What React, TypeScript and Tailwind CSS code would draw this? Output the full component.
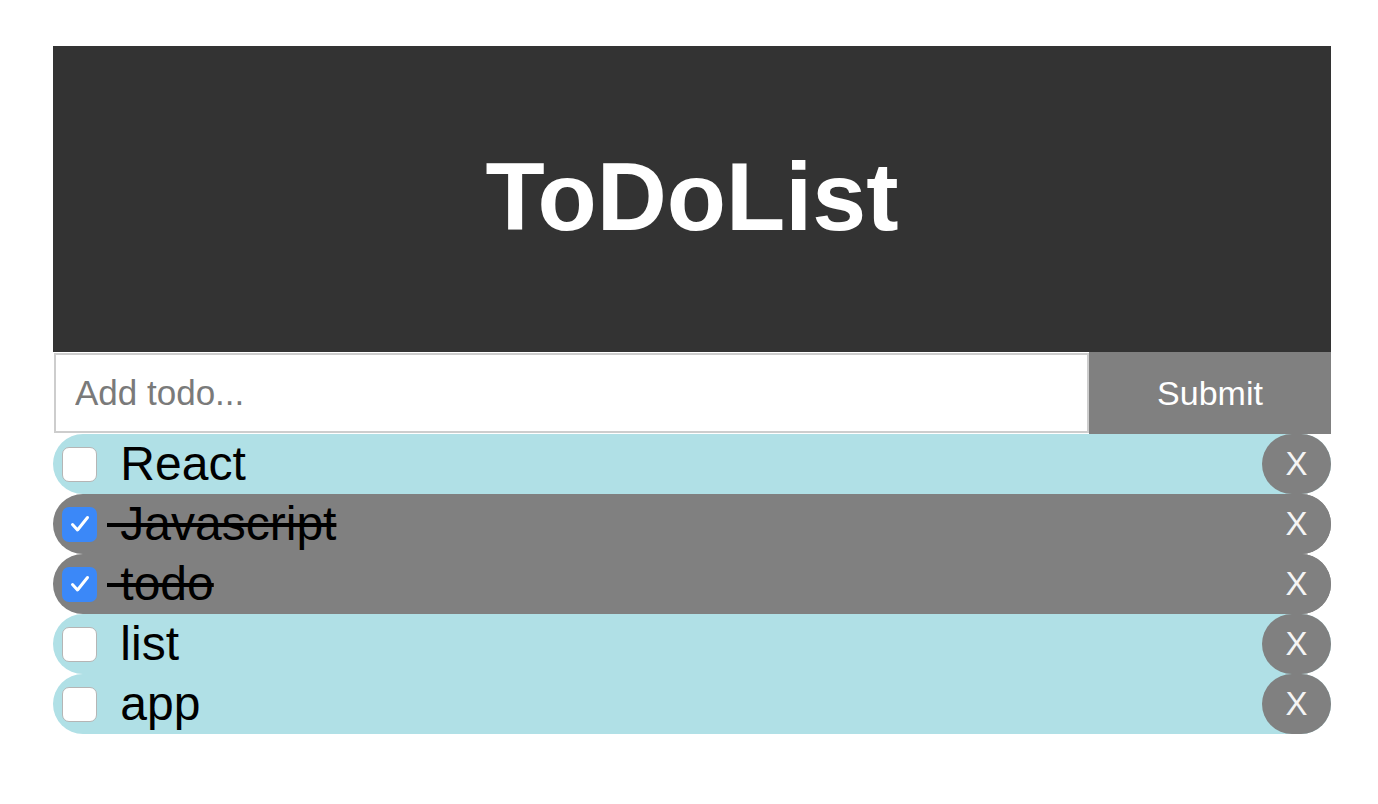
import { useState } from "react";

type Todo = { id: number; text: string; done: boolean };

const initialTodos: Todo[] = [
    { id: 1, text: "React", done: false },
    { id: 2, text: "Javascript", done: true },
    { id: 3, text: "todo", done: true },
    { id: 4, text: "list", done: false },
    { id: 5, text: "app", done: false },
];

export default function App() {
    const [todos, setTodos] = useState<Todo[]>(initialTodos);
    const [input, setInput] = useState<string>("");

    function addTodo() {
        if (input.trim().length === 0) return;
        setTodos([...todos, { id: Date.now(), text: input, done: false }]);
        setInput("");
    }

    function toggle(id: number) {
        setTodos(todos.map(t => (t.id === id ? { ...t, done: !t.done } : t)));
    }

    function remove(id: number) {
        setTodos(todos.filter(t => t.id !== id));
    }

    return (
        <div className="min-h-screen bg-white pt-[46px] font-['Liberation_Sans',Arial,sans-serif]">
            <div className="ml-[53px] w-[1278px]">
                <header className="flex h-[306px] items-center justify-center bg-[#333333]">
                    <h1 className="pb-[6px] text-[97px] font-bold leading-none text-white">ToDoList</h1>
                </header>

                <form
                    className="flex h-[82px]"
                    onSubmit={e => {
                        e.preventDefault();
                        addTodo();
                    }}
                >
                    <input
                        value={input}
                        onChange={e => setInput(e.target.value)}
                        placeholder="Add todo..."
                        className="my-px ml-[1px] flex-1 border-2 border-[#cdcdcd] bg-white px-[19px] text-[35px] text-black outline-none placeholder:text-[#7a7a7a]"
                    />
                    <button type="submit" className="w-[242px] bg-[#808080] text-[34px] text-white">
                        Submit
                    </button>
                </form>

                <ul>
                    {todos.map(todo => (
                        <li
                            key={todo.id}
                            className={`flex h-[60px] items-center rounded-[30px] ${todo.done ? "bg-[#808080]" : "bg-[#b0e0e6]"}`}
                        >
                            <button
                                onClick={() => toggle(todo.id)}
                                className={`ml-[9px] flex h-[35px] w-[35px] items-center justify-center rounded-[7px] ${todo.done ? "bg-[#3b88f8]" : "border border-[#b5b5b5] bg-white"}`}
                            >
                                {todo.done && (
                                    <svg width="26" height="26" viewBox="0 0 26 26">
                                        <path d="M5.5 13.5 L10.5 19 L20.5 6.5" fill="none" stroke="white" strokeWidth="3" strokeLinecap="round" strokeLinejoin="round" />
                                    </svg>
                                )}
                            </button>
                            <span className={`ml-[10px] whitespace-pre text-[48px] leading-none text-black ${todo.done ? "line-through" : ""}`}>
                                {" " + todo.text}
                            </span>
                            <button
                                onClick={() => remove(todo.id)}
                                className="ml-auto flex h-[60px] w-[69px] items-center justify-center rounded-full bg-[#808080] text-[33px] text-[#f4f4f4]"
                            >
                                X
                            </button>
                        </li>
                    ))}
                </ul>
            </div>
        </div>
    );
}
